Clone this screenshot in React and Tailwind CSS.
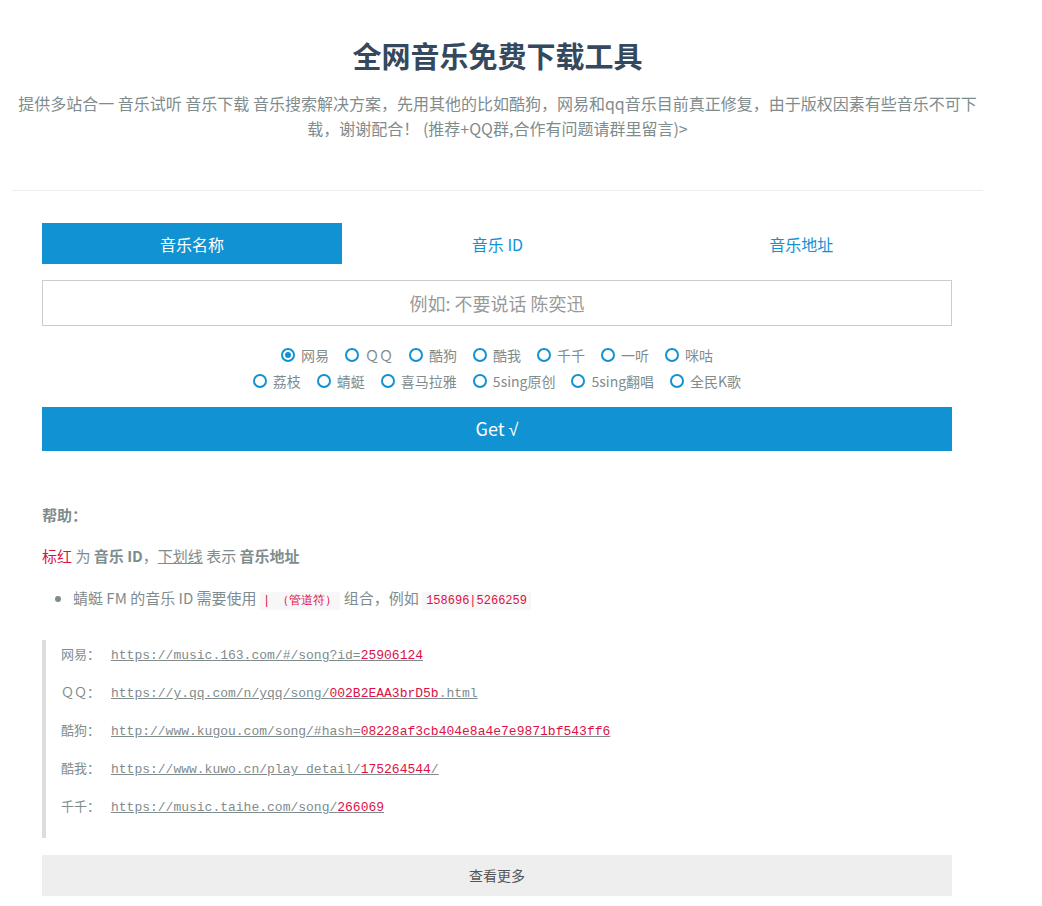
import React, { useState } from "react";

const sites1 = ["网易", "ＱＱ", "酷狗", "酷我", "千千", "一听", "咪咕"];
const sites2 = ["荔枝", "蜻蜓", "喜马拉雅", "5sing原创", "5sing翻唱", "全民K歌"];

const examples = [
  { name: "网易：", base: "https://music.163.com/#/song?id=", id: "25906124", tail: "" },
  { name: "ＱＱ：", base: "https://y.qq.com/n/yqq/song/", id: "002B2EAA3brD5b", tail: ".html" },
  { name: "酷狗：", base: "http://www.kugou.com/song/#hash=", id: "08228af3cb404e8a4e7e9871bf543ff6", tail: "" },
  { name: "酷我：", base: "https://www.kuwo.cn/play_detail/", id: "175264544", tail: "/" },
  { name: "千千：", base: "https://music.taihe.com/song/", id: "266069", tail: "" },
  { name: "一听：", base: "https://www.1ting.com/player/b6/player_", id: "357838", tail: ".html" },
];

const mono = { fontFamily: '"Liberation Mono", "DejaVu Sans Mono", monospace' };

const Radio = ({ label, checked, onClick }) => (
  <label className="flex items-center gap-[6px] cursor-pointer" onClick={onClick}>
    <span className="w-[14px] h-[14px] rounded-full border-2 border-[#1192d3] flex items-center justify-center">
      {checked && <span className="w-[6px] h-[6px] rounded-full bg-[#1192d3]" />}
    </span>
    <span>{label}</span>
  </label>
);

export default function App() {
  const [tab, setTab] = useState(0);
  const [site, setSite] = useState("网易");

  return (
    <div className="min-h-screen bg-white text-[#7f8c8d]" style={{ fontFamily: '"Noto Sans CJK SC", "Noto Sans", sans-serif' }}>
      <div className="w-[971px] ml-[12px]">
        <div className="pt-[33px] pb-[49px] text-center border-b border-[#eeeeee]">
          <h1 className="text-[29px] leading-[44px] font-bold text-[#34495e]">全网音乐免费下载工具</h1>
          <p className="mt-[14px] text-[16px] leading-[25px] px-[2px]">
            提供多站合一 音乐试听 音乐下载 音乐搜索解决方案，先用其他的比如酷狗，网易和qq音乐目前真正修复，由于版权因素有些音乐不可下载，谢谢配合！ (推荐+QQ群,合作有问题请群里留言)&gt;
          </p>
        </div>

        <div className="px-[30px] pt-[32px]">
          <div className="grid grid-cols-3 text-[16px]">
            {["音乐名称", "音乐 ID", "音乐地址"].map((t, i) => (
              <button
                key={t}
                onClick={() => setTab(i)}
                className={
                  "h-[41px] " +
                  (i === 0 ? "w-[300px] " : "") +
                  (tab === i ? "bg-[#1192d3] text-white" : "text-[#1192d3]")
                }
              >
                {t}
              </button>
            ))}
          </div>

          <input
            className="mt-[16px] w-[910px] h-[46px] border border-[#cccccc] text-center text-[18px] outline-none placeholder:text-[#999999]"
            placeholder="例如: 不要说话 陈奕迅"
          />

          <div className="w-[910px] mt-[16px] text-[14px] leading-[26px]">
            <div className="flex justify-center gap-x-[16px]">
              {sites1.map((s) => (
                <Radio key={s} label={s} checked={site === s} onClick={() => setSite(s)} />
              ))}
            </div>
            <div className="flex justify-center gap-x-[16px]">
              {sites2.map((s) => (
                <Radio key={s} label={s} checked={site === s} onClick={() => setSite(s)} />
              ))}
            </div>
          </div>

          <button className="mt-[13px] w-[910px] h-[44px] bg-[#1192d3] text-white text-[18px]">
            Get <span style={{ fontFamily: '"Liberation Sans", "DejaVu Sans", sans-serif' }}>√</span>
          </button>

          <div className="mt-[52px] text-[15px]">
            <p className="font-bold leading-[24px]">帮助：</p>
            <p className="mt-[17px] leading-[24px]">
              <span className="text-[#dd1144]">标红</span> 为 <b>音乐 ID</b>，<span className="underline">下划线</span> 表示 <b>音乐地址</b>
            </p>
            <ul className="mt-[18px] ml-[15px] list-disc pl-[16px] leading-[24px] marker:text-[#7f8c8d]">
              <li>
                蜻蜓 FM 的音乐 ID 需要使用{" "}
                <code className="bg-[#f7f7f7] text-[#dd1144] text-[12px] px-[3px] py-[2px]">| （管道符）</code> 组合，例如{" "}
                <code className="bg-[#f7f7f7] text-[#dd1144] text-[12px] px-[4px] py-[2px]" style={mono}>
                  158696|5266259
                </code>
              </li>
            </ul>
          </div>

          <div className="mt-[27px] h-[198px] overflow-hidden border-l-4 border-[#dddddd] pl-[15px] pt-[3px] text-[13px]">
            {examples.map((e) => (
              <p key={e.name} className="h-[38px] leading-[22px]">
                <span className="inline-block w-[50px]">{e.name}</span>
                <span className="underline text-[#7f8c8d]" style={{ ...mono, fontSize: "13px" }}>
                  {e.base}
                  <span className="text-[#dd1144]">{e.id}</span>
                  {e.tail}
                </span>
              </p>
            ))}
          </div>

          <button className="mt-[17px] w-[910px] h-[41px] bg-[#eeeeee] text-[#555555] text-[14px]">查看更多</button>
        </div>
      </div>
    </div>
  );
}
